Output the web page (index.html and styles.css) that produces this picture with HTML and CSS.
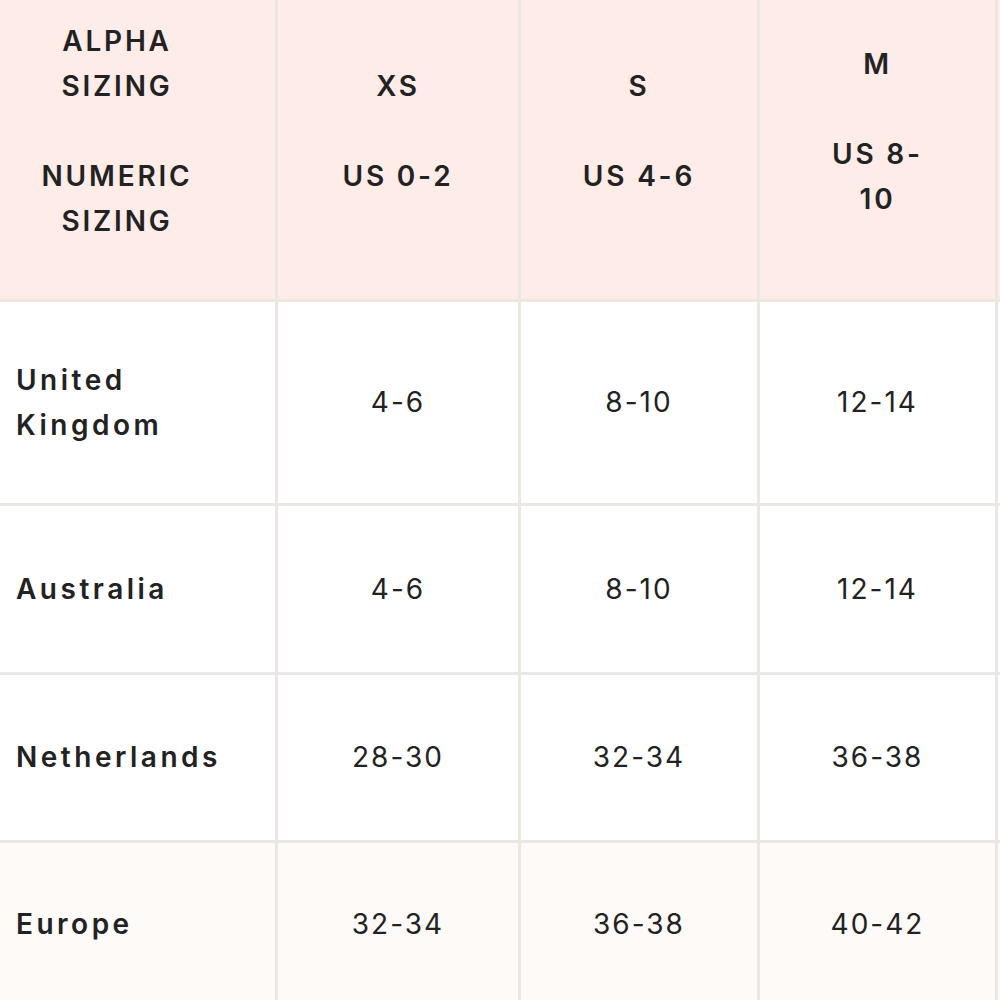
FILE: index.html
```html
<!DOCTYPE html>
<html>
<head>
<meta charset="utf-8">
<link rel="stylesheet" href="styles.css">
</head>
<body>
<div class="chart">
  <div class="cell head first">ALPHA<br>SIZING<br><br>NUMERIC<br>SIZING</div>
  <div class="cell head">XS<br><br>US 0-2</div>
  <div class="cell head">S<br><br>US 4-6</div>
  <div class="cell head">M<br><br>US 8-<br>10</div>
  <div class="cell head"></div>

  <div class="cell label">United<br>Kingdom</div>
  <div class="cell">4-6</div>
  <div class="cell">8-10</div>
  <div class="cell">12-14</div>
  <div class="cell"></div>

  <div class="cell label">Australia</div>
  <div class="cell">4-6</div>
  <div class="cell">8-10</div>
  <div class="cell">12-14</div>
  <div class="cell"></div>

  <div class="cell label">Netherlands</div>
  <div class="cell">28-30</div>
  <div class="cell">32-34</div>
  <div class="cell">36-38</div>
  <div class="cell"></div>

  <div class="cell label tint">Europe</div>
  <div class="cell tint">32-34</div>
  <div class="cell tint">36-38</div>
  <div class="cell tint">40-42</div>
  <div class="cell tint"></div>
</div>
</body>
</html>
```

FILE: styles.css
```css
html, body {
  margin: 0;
  padding: 0;
  background: #ffffff;
  overflow: hidden;
}

.chart {
  display: grid;
  grid-template-columns: 275px 240px 236px 235px 2px;
  grid-template-rows: 299px 201px 166px 165px 162px;
  gap: 3px;
  background: #ede7e3;
  width: 1000px;
  overflow: hidden;
  font-family: Inter, "Open Sans", "Liberation Sans", sans-serif;
  color: #222222;
}

.cell {
  background: #ffffff;
  display: flex;
  align-items: center;
  justify-content: center;
  text-align: center;
  font-size: 28px;
  line-height: 45px;
  letter-spacing: 2px;
}

.head {
  background: #fdece7;
  font-weight: 600;
  font-size: 28px;
  letter-spacing: 2.8px;
  padding-bottom: 36px;
}

.head.first {
  padding: 0 57px 36px 16px;
}

.label {
  justify-content: flex-start;
  text-align: left;
  padding-left: 16px;
  font-weight: 600;
  letter-spacing: 3.5px;
}

.tint {
  background: #fefaf8;
}
```
